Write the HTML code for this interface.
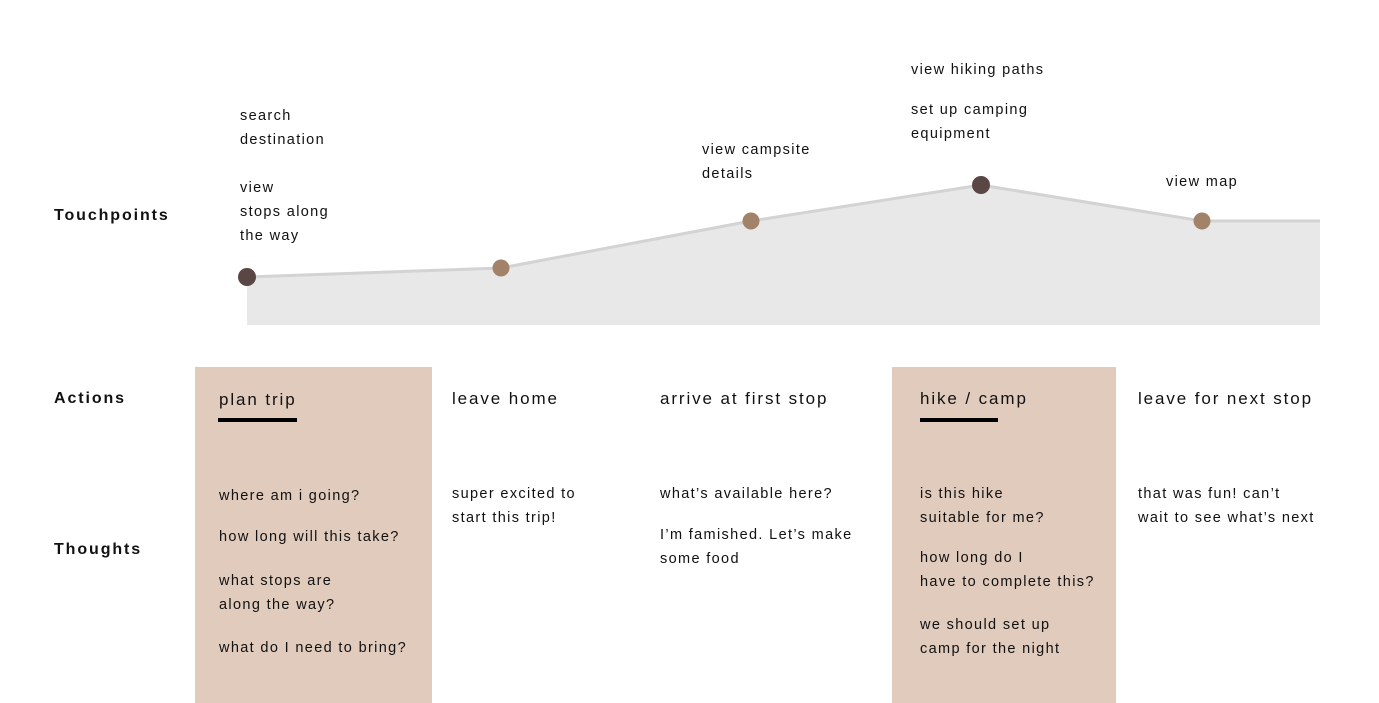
<!DOCTYPE html>
<html><head><meta charset="utf-8"><style>
*{margin:0;padding:0}
body{width:1379px;height:703px;position:relative;background:#fff;font-family:"Liberation Sans",sans-serif;color:#111;overflow:hidden}
.t{position:absolute;font-size:14.5px;letter-spacing:1.35px;line-height:24px;white-space:nowrap;margin-top:1px}
.l{position:absolute;font-size:16px;letter-spacing:1.9px;font-weight:bold;line-height:24px}
.a{position:absolute;font-size:17px;letter-spacing:1.9px;line-height:24px;white-space:nowrap}
.box{position:absolute;background:#e0cbbd;top:367px;height:336px}
.ul{position:absolute;height:4px;background:#000;top:418px}
</style></head><body>
<svg style="position:absolute;left:0;top:0" width="1379" height="703">
<polygon points="247,277 501,268 751,221 981,185 1202,221 1320,221 1320,325 247,325" fill="#e8e8e8"/>
<polyline points="247,277 501,268 751,221 981,185 1202,221 1320,221" fill="none" stroke="#d3d3d3" stroke-width="3"/>
<circle cx="247" cy="277" r="9" fill="#5a4644"/>
<circle cx="501" cy="268" r="8.5" fill="#a28369"/>
<circle cx="751" cy="221" r="8.5" fill="#a28369"/>
<circle cx="981" cy="185" r="9" fill="#5a4644"/>
<circle cx="1202" cy="221" r="8.5" fill="#a28369"/>
</svg>
<div class="box" style="left:195px;width:237px"></div>
<div class="box" style="left:892px;width:224px"></div>
<div class="ul" style="left:218px;width:79px"></div>
<div class="ul" style="left:920px;width:78px"></div>

<div class="l" style="left:54px;top:204px">Touchpoints</div>
<div class="l" style="left:54px;top:387px">Actions</div>
<div class="l" style="left:54px;top:538px">Thoughts</div>

<div class="t" style="left:240px;top:103px">search<br>destination</div>
<div class="t" style="left:240px;top:175px">view<br>stops along<br>the way</div>
<div class="t" style="left:702px;top:137px">view campsite<br>details</div>
<div class="t" style="left:911px;top:57px">view hiking paths</div>
<div class="t" style="left:911px;top:97px">set up camping<br>equipment</div>
<div class="t" style="left:1166px;top:169px">view map</div>

<div class="a" style="left:219px;top:388px">plan trip</div>
<div class="a" style="left:452px;top:387px">leave home</div>
<div class="a" style="left:660px;top:387px">arrive at first stop</div>
<div class="a" style="left:920px;top:387px">hike / camp</div>
<div class="a" style="left:1138px;top:387px">leave for next stop</div>

<div class="t" style="left:219px;top:483px">where am i going?</div>
<div class="t" style="left:219px;top:524px">how long will this take?</div>
<div class="t" style="left:219px;top:568px">what stops are<br>along the way?</div>
<div class="t" style="left:219px;top:635px">what do I need to bring?</div>

<div class="t" style="left:452px;top:481px">super excited to<br>start this trip!</div>

<div class="t" style="left:660px;top:481px">what’s available here?</div>
<div class="t" style="left:660px;top:522px">I’m famished. Let’s make<br>some food</div>

<div class="t" style="left:920px;top:481px">is this hike<br>suitable for me?</div>
<div class="t" style="left:920px;top:545px">how long do I<br>have to complete this?</div>
<div class="t" style="left:920px;top:612px">we should set up<br>camp for the night</div>

<div class="t" style="left:1138px;top:481px">that was fun! can’t<br>wait to see what’s next</div>
</body></html>
